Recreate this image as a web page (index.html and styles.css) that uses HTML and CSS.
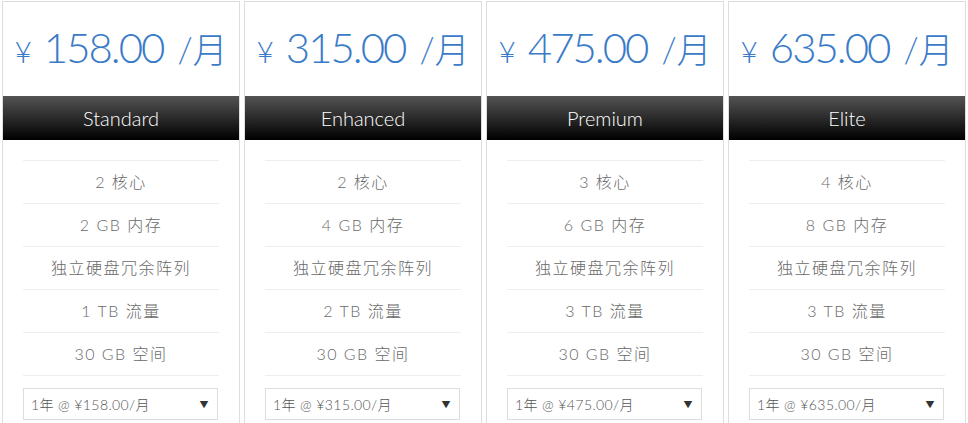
FILE: index.html
```html
<!DOCTYPE html>
<html lang="zh">
<head>
<meta charset="utf-8">
<title>Pricing</title>
<link rel="stylesheet" href="styles.css">
</head>
<body>
<div class="plans">
  <div class="col">
    <div class="card">
      <div class="price"><span class="yen">¥</span><span class="num">158.00</span><span class="per">/月</span></div>
      <div class="name">Standard</div>
      <ul class="features">
        <li>2 核心</li>
        <li>2 GB 内存</li>
        <li>独立硬盘冗余阵列</li>
        <li>1 TB 流量</li>
        <li>30 GB 空间</li>
      </ul>
      <div class="select"><span>1年 @ ¥158.00/月</span><span class="arrow">▼</span></div>
    </div>
  </div>
  <div class="col">
    <div class="card">
      <div class="price"><span class="yen">¥</span><span class="num">315.00</span><span class="per">/月</span></div>
      <div class="name">Enhanced</div>
      <ul class="features">
        <li>2 核心</li>
        <li>4 GB 内存</li>
        <li>独立硬盘冗余阵列</li>
        <li>2 TB 流量</li>
        <li>30 GB 空间</li>
      </ul>
      <div class="select"><span>1年 @ ¥315.00/月</span><span class="arrow">▼</span></div>
    </div>
  </div>
  <div class="col">
    <div class="card">
      <div class="price"><span class="yen">¥</span><span class="num">475.00</span><span class="per">/月</span></div>
      <div class="name">Premium</div>
      <ul class="features">
        <li>3 核心</li>
        <li>6 GB 内存</li>
        <li>独立硬盘冗余阵列</li>
        <li>3 TB 流量</li>
        <li>30 GB 空间</li>
      </ul>
      <div class="select"><span>1年 @ ¥475.00/月</span><span class="arrow">▼</span></div>
    </div>
  </div>
  <div class="col">
    <div class="card">
      <div class="price"><span class="yen">¥</span><span class="num">635.00</span><span class="per">/月</span></div>
      <div class="name">Elite</div>
      <ul class="features">
        <li>4 核心</li>
        <li>8 GB 内存</li>
        <li>独立硬盘冗余阵列</li>
        <li>3 TB 流量</li>
        <li>30 GB 空间</li>
      </ul>
      <div class="select"><span>1年 @ ¥635.00/月</span><span class="arrow">▼</span></div>
    </div>
  </div>
</div>
</body>
</html>
```

FILE: styles.css
```css
* { box-sizing: border-box; }
html, body { margin: 0; padding: 0; background: #fff; }
body {
  font-family: Lato, "Noto Sans CJK SC", sans-serif;
  font-weight: 300;
  color: #666;
}
.plans {
  display: flex;
  padding-top: 1px;
}
.col {
  flex: 1 1 0;
  padding: 0 2px;
}
.card {
  border: 1px solid #ddd;
  height: 440px;
}
.price {
  height: 94px;
  display: flex;
  align-items: baseline;
  justify-content: center;
  color: #3a7bc8;
  font-weight: 300;
  padding-top: 45px;
  line-height: 0;
}
.price .yen { font-size: 30px; margin-right: 12px; }
.price .num { font-size: 42px; letter-spacing: -2px; margin-right: 14px; }
.price .per { font-size: 35px; }
.name {
  height: 44px;
  line-height: 44px;
  text-align: center;
  color: #fff;
  font-size: 20px;
  font-weight: 300;
  background: linear-gradient(to bottom, #535353 0%, #2a2a2a 50%, #000 100%);
}
.features {
  list-style: none;
  margin: 20px 20px 0;
  padding: 0;
}
.features li {
  border-top: 1px solid #eee;
  height: 43px;
  line-height: 42px;
  text-align: center;
  font-size: 16px;
  letter-spacing: 1.5px;
  color: #6a6a6a;
}
.features li:last-child { border-bottom: 1px solid #eee; height: 44px; }
.select {
  margin: 12px 21px 0 20px;
  height: 32px;
  border: 1px solid #ddd;
  display: flex;
  align-items: center;
  justify-content: space-between;
  padding: 0 8px 0 7px;
  font-size: 14px;
  letter-spacing: 0.4px;
  color: #555;
}
.select .arrow { font-size: 9px; color: #333; }
```
